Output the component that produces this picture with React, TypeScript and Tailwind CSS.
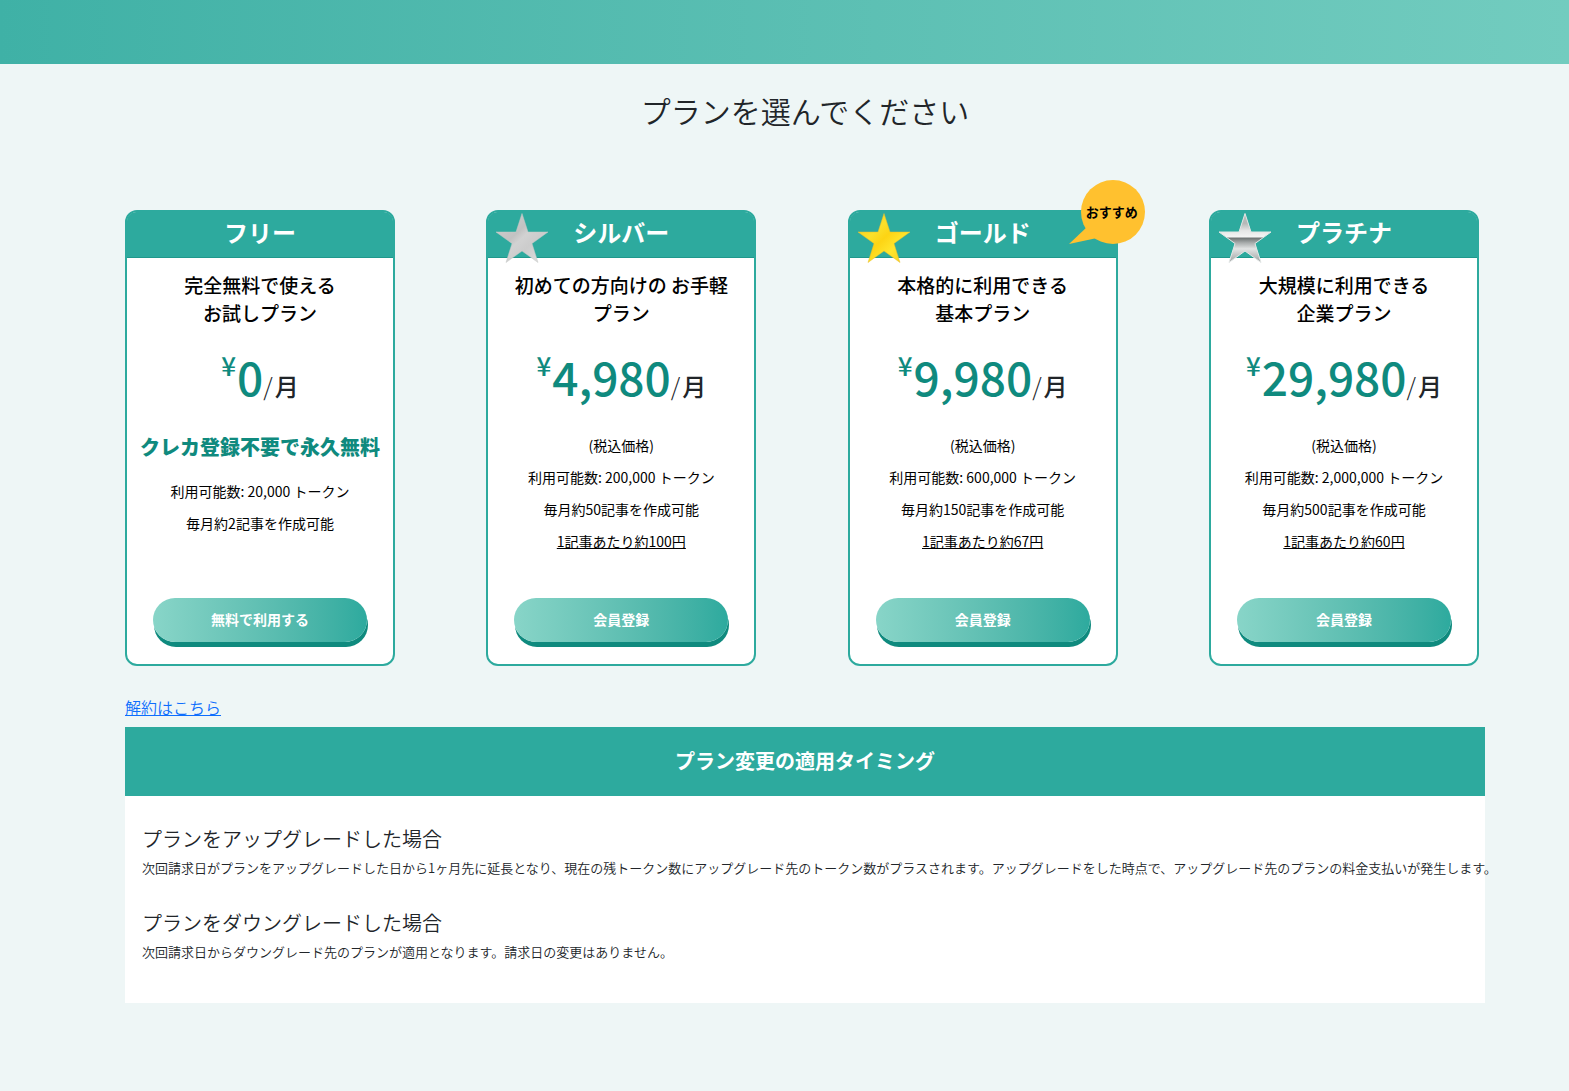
import type { ReactNode } from "react";

type Plan = {
  id: string;
  name: string;
  lead: ReactNode;
  price: string;
  note?: string;
  features: string[];
  unit?: string;
  action: string;
  star?: "silver" | "gold" | "platinum";
  recommended?: boolean;
};

const plans: Plan[] = [
  {
    id: "free",
    name: "フリー",
    lead: <>完全無料で使える<br />お試しプラン</>,
    price: "0",
    note: "クレカ登録不要で永久無料",
    features: ["利用可能数: 20,000 トークン", "毎月約2記事を作成可能"],
    action: "無料で利用する",
  },
  {
    id: "silver",
    name: "シルバー",
    lead: <>初めての方向けの お手軽<br />プラン</>,
    price: "4,980",
    features: ["(税込価格)", "利用可能数: 200,000 トークン", "毎月約50記事を作成可能"],
    unit: "1記事あたり約100円",
    action: "会員登録",
    star: "silver",
  },
  {
    id: "gold",
    name: "ゴールド",
    lead: <>本格的に利用できる<br />基本プラン</>,
    price: "9,980",
    features: ["(税込価格)", "利用可能数: 600,000 トークン", "毎月約150記事を作成可能"],
    unit: "1記事あたり約67円",
    action: "会員登録",
    star: "gold",
    recommended: true,
  },
  {
    id: "platinum",
    name: "プラチナ",
    lead: <>大規模に利用できる<br />企業プラン</>,
    price: "29,980",
    features: ["(税込価格)", "利用可能数: 2,000,000 トークン", "毎月約500記事を作成可能"],
    unit: "1記事あたり約60円",
    action: "会員登録",
    star: "platinum",
  },
];

function Star({ kind }: { kind: "silver" | "gold" | "platinum" }) {
  return (
    <svg className="absolute left-[7px] -top-px h-[54px] w-[54px]" viewBox="-1 -1 54 54" aria-hidden="true">
      <defs>
        <linearGradient id="star-silver" x1="0" y1="0" x2="1" y2="1">
          <stop offset="0" stopColor="#d2d2d2" />
          <stop offset="0.4" stopColor="#c2c2c2" />
          <stop offset="0.5" stopColor="#d2d2d2" />
          <stop offset="0.65" stopColor="#cccccc" />
          <stop offset="1" stopColor="#e2e2e2" />
        </linearGradient>
        <linearGradient id="star-gold" x1="0" y1="0" x2="1" y2="1">
          <stop offset="0" stopColor="#f5c81e" />
          <stop offset="0.35" stopColor="#fbe02a" />
          <stop offset="0.5" stopColor="#fdd414" />
          <stop offset="0.7" stopColor="#ffe62e" />
          <stop offset="1" stopColor="#f6c915" />
        </linearGradient>
        <linearGradient id="star-platinum" x1="0" y1="0" x2="0" y2="1">
          <stop offset="0" stopColor="#bdbdbd" />
          <stop offset="0.2" stopColor="#b4b8b7" />
          <stop offset="0.35" stopColor="#e6e6e6" />
          <stop offset="0.48" stopColor="#f4f4f4" />
          <stop offset="0.5" stopColor="#6f7474" />
          <stop offset="0.6" stopColor="#a9adad" />
          <stop offset="0.72" stopColor="#e2e4e4" />
          <stop offset="1" stopColor="#9da1a1" />
        </linearGradient>
      </defs>
      <path
        d="M26 1.5 32 20H52L36 31.5 42 50.5 26 39 10 50.5 16 31.5 0 20H20Z"
        fill={`url(#star-${kind})`}
        stroke={kind === "platinum" ? "#e3e7e6" : kind === "gold" ? "#e9bf2c" : "#c4c8c7"}
        strokeWidth={kind === "platinum" ? 1 : 0.5}
      />
    </svg>
  );
}

function Balloon() {
  return (
    <div className="absolute -right-[29px] -top-8 h-16 w-[76px]">
      <svg className="h-full w-full" viewBox="0 0 76 64" fill="#ffc12f" aria-hidden="true">
        <circle cx="44" cy="32" r="32" />
        <path d="M0 64 18 47 28 58Z" />
      </svg>
      <span className="absolute inset-y-0 left-3 right-0 flex items-center justify-center pr-0.5 text-[13px] font-bold text-black">
        おすすめ
      </span>
    </div>
  );
}

function PlanCard({ plan }: { plan: Plan }) {
  return (
    <section className="relative flex w-[270px] flex-col rounded-xl border-2 border-[#2daa9e] bg-white text-center">
      <h2 className="h-[46px] rounded-t-[9px] border-b border-[#1f988c] bg-[#2daa9e] text-2xl leading-10 font-bold text-white">
        {plan.name}
      </h2>
      {plan.star && <Star kind={plan.star} />}
      {plan.recommended && <Balloon />}
      <p className="pt-[13px] text-[19px] leading-7 font-medium text-black">{plan.lead}</p>
      <p className="flex h-[102px] items-baseline justify-center text-2xl leading-[98px] font-medium text-[#212529]">
        <span className="relative -top-5 mr-px text-[26px] text-[#0f8a7e]">¥</span>
        <span className="text-[46px] text-[#0f8a7e]">{plan.price}</span>
        <span className="mr-0.5 font-light">/</span>月
      </p>
      {plan.note && <p className="mb-2.5 text-xl leading-9 font-black text-[#0f8a7e]">{plan.note}</p>}
      <ul className="text-sm leading-8 font-normal text-black">
        {plan.features.map((feature) => (
          <li key={feature}>{feature}</li>
        ))}
        {plan.unit && <li className="underline">{plan.unit}</li>}
      </ul>
      <div className="mt-auto px-[26px] pt-[41px] pb-[22px]">
        <button
          type="button"
          className="h-11 w-full rounded-full bg-linear-to-r from-[#88d5c8] to-[#2daa9e] pb-0.5 text-sm font-bold text-white shadow-[1px_5px_0_#0f8a7e]"
        >
          {plan.action}
        </button>
      </div>
    </section>
  );
}

export default function App() {
  return (
    <div className="min-h-screen bg-[#eef6f6] font-['Noto_Sans_CJK_JP',sans-serif] font-[350] text-[#212529]">
      <header className="h-16 bg-linear-to-r from-[#3fb1a6] to-[#72ccbf]" />
      <main className="pr-[84px] pb-[88px] pl-[125px]">
        <h1 className="pt-[22px] text-center text-3xl leading-[48px]">プランを選んでください</h1>
        <div className="mt-[76px] flex justify-between gap-4 pr-[6px]">
          {plans.map((plan) => (
            <PlanCard key={plan.id} plan={plan} />
          ))}
        </div>
        <a href="#cancel" className="mt-[29px] block w-fit leading-6 text-[#0d6efd] underline">
          解約はこちら
        </a>
        <section className="mt-2 bg-white">
          <h2 className="bg-[#2daa9e] pb-px text-center text-xl leading-[68px] font-bold text-white">
            プラン変更の適用タイミング
          </h2>
          <div className="space-y-[26px] pt-[29px] pb-9 pl-[17px]">
            <div>
              <h3 className="text-xl leading-7">プランをアップグレードした場合</h3>
              <p className="text-[13px] leading-[30px] min-[1560px]:whitespace-nowrap">
                次回請求日がプランをアップグレードした日から1ヶ月先に延長となり、現在の残トークン数にアップグレード先のトークン数がプラスされます。アップグレードをした時点で、アップグレード先のプランの料金支払いが発生します。
              </p>
            </div>
            <div>
              <h3 className="text-xl leading-7">プランをダウングレードした場合</h3>
              <p className="text-[13px] leading-[30px]">
                次回請求日からダウングレード先のプランが適用となります。請求日の変更はありません。
              </p>
            </div>
          </div>
        </section>
      </main>
    </div>
  );
}
